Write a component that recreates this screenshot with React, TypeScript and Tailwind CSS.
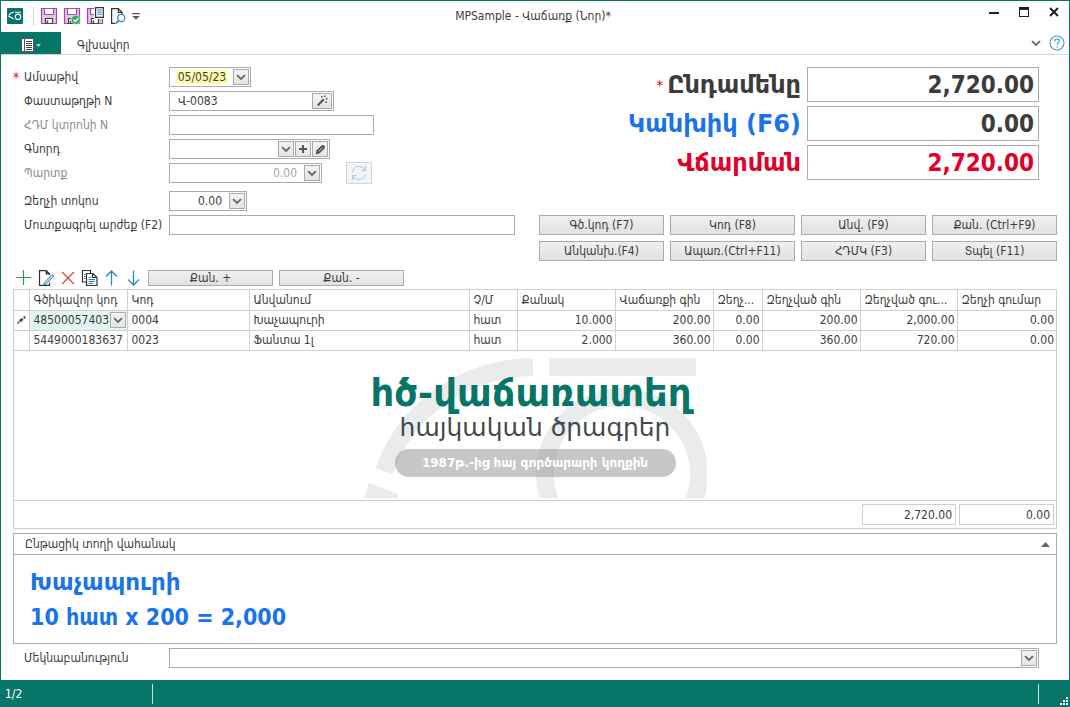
import React, { useState } from "react";
import clsx from "clsx";

const Chevron = () => (
  <svg width="10" height="7" viewBox="0 0 10 7" fill="none" className="shrink-0">
    <path d="M1 1.2l4 3.8 4-3.8" stroke="#666" strokeWidth="1.8" />
  </svg>
);

const smallBtn =
  "h-4 shrink-0 flex items-center justify-center border border-[#ababab] bg-linear-to-b from-[#f4f4f4] to-[#e4e4e4]";
const box = "h-5 flex items-center gap-px border border-[#ababab] bg-white p-px";
const field = "min-w-0 flex-1 bg-transparent outline-none";

const DropButton = ({ label }: { label: string }) => (
  <button aria-label={label} className={clsx(smallBtn, "w-4")}>
    <Chevron />
  </button>
);

interface DropSelectProps {
  id: string;
  options: string[];
}

const DropSelect = ({ id, options }: DropSelectProps) => (
  <div className="relative flex flex-1 items-center justify-end">
    <select id={id} className="absolute inset-0 w-full appearance-none px-2 outline-none">
      <option value=""></option>
      {options.map((o) => (
        <option key={o}>{o}</option>
      ))}
    </select>
    <span className={clsx(smallBtn, "pointer-events-none relative w-4")}>
      <Chevron />
    </span>
  </div>
);

interface RowProps {
  id: string;
  label: string;
  required?: boolean;
  muted?: boolean;
  children: React.ReactNode;
}

const FormRow = ({ id, label, required, muted, children }: RowProps) => (
  <div className="flex h-5 items-center">
    <label
      htmlFor={id}
      className={clsx("flex w-[156px] shrink-0 whitespace-nowrap", muted && "text-[#8c8c8c]")}
    >
      <span className="w-[11px] text-[14px] leading-4 text-red-600">{required && "*"}</span>
      {label}
    </label>
    {children}
  </div>
);

const totals = [
  { id: "total", label: "Ընդամենը", value: "2,720.00", required: true, labelColor: "text-[#3c3c3c]", color: "text-[#3c3c3c]" },
  { id: "cash", label: "Կանխիկ (F6)", value: "0.00", labelColor: "text-[#1a73e8]", color: "text-[#3c3c3c]" },
  { id: "due", label: "Վճարման", value: "2,720.00", labelColor: "text-[#e00029]", color: "text-[#e00029]" },
];

const actions = [
  "Գծ.կոդ (F7)",
  "Կոդ (F8)",
  "Անվ. (F9)",
  "Քան. (Ctrl+F9)",
  "Անկանխ.(F4)",
  "Ապառ.(Ctrl+F11)",
  "ՀԴՄԿ (F3)",
  "Տպել (F11)",
];

const columns = [
  "Գծիկավոր կոդ",
  "Կոդ",
  "Անվանում",
  "Չ/Մ",
  "Քանակ",
  "Վաճառքի գին",
  "Զեղչ...",
  "Զեղչված գին",
  "Զեղչված գու...",
  "Զեղչի գումար",
];

const rows = [
  ["48500057403", "0004", "Խաչապուրի", "հատ", "10.000", "200.00", "0.00", "200.00", "2,000.00", "0.00"],
  ["5449000183637", "0023", "Ֆանտա 1լ", "հատ", "2.000", "360.00", "0.00", "360.00", "720.00", "0.00"],
];

const Floppy = ({ children }: { children?: React.ReactNode }) => (
  <svg width="18" height="18" viewBox="0 0 18 18" fill="none">
    <path d="M1.500 1.500h15v15h-15z" fill="#e3c3e6" stroke="#9b4fa3" strokeWidth="1.2" />
    <path d="M4.500 1.500h9v6h-9z" fill="#fff" stroke="#9b4fa3" strokeWidth="1.2" />
    <path d="M5.500 11.500h7v5h-7z" fill="#fff" stroke="#444" strokeWidth="1.2" />
    <path d="M7.500 13.500v3" stroke="#444" strokeWidth="1.4" />
    {children}
  </svg>
);

const Logo = () => (
  <svg width="16" height="16" viewBox="0 0 16 16" fill="none">
    <rect width="16" height="16" rx="1" fill="#077568" />
    <path d="M7 4.2C4.500 4.300 2.800 5.600 1.800 7.400M1.400 8.400C3 8.600 5 9.600 6.600 11.200M8 4.200h6" stroke="#fff" strokeWidth="1.1" />
    <circle cx="11" cy="8.8" r="2.7" stroke="#fff" strokeWidth="1.1" />
  </svg>
);

const TitleBar = () => (
  <header className="flex h-[31px] items-center pl-1.5 pr-1.5 pb-px">
    <div className="flex flex-1 items-center">
      <Logo />
      <span className="ml-2.5 mr-1.5 h-[19px] w-px bg-[#d4d4d4]" />
      <div className="flex items-center gap-[5px]">
        <button aria-label="Save">
          <Floppy />
        </button>
        <button aria-label="Save and approve">
          <Floppy>
            <circle cx="12.8" cy="12.8" r="4.6" fill="#3fa66b" stroke="#fff" strokeWidth=".5" />
            <path d="M10.500 12.800l1.800 1.800 3-3.400" stroke="#fff" strokeWidth="1.3" />
          </Floppy>
        </button>
        <button aria-label="Save and print">
          <Floppy>
            <path d="M8 0h10v12H8z" fill="#fff" />
            <path d="M9.600.700h7.700v9.600H9.600z" fill="#fff" stroke="#333" strokeWidth="1.2" />
            <path d="M11.300 3h4.500M11.300 5.100h4.500M11.300 7.200h4.500" stroke="#1f7fc4" />
          </Floppy>
        </button>
        <button aria-label="Preview">
          <svg width="18" height="18" viewBox="0 0 18 18" fill="none">
            <path d="M6 16.400H2.600V1.600h6.800l3.800 3.800V7M9.400 1.600v3.800h3.800" stroke="#333" strokeWidth="1.2" />
            <circle cx="12.2" cy="11" r="3.6" stroke="#2f86c5" strokeWidth="1.2" />
            <path d="M9.600 13.600l-3 3" stroke="#2f86c5" strokeWidth="1.6" />
          </svg>
        </button>
        <button aria-label="Customize">
          <svg width="8" height="7" viewBox="0 0 8 7">
            <path d="M0 0h8v1.300H0zM.300 3h7.400L4 6.600z" fill="#555" />
          </svg>
        </button>
      </div>
    </div>
    <h1 className="text-[12px]">MPSample - Վաճառք (Նոր)*</h1>
    <div className="flex flex-1 items-center justify-end gap-5 pr-1 pb-2">
      <button aria-label="Minimize">
        <svg width="10" height="10">
          <path d="M0 5h10v2H0z" fill="#222" />
        </svg>
      </button>
      <button aria-label="Maximize">
        <svg width="10" height="10">
          <path d="M0 0h10v10H0zM1 3v6h8V3z" fill="#222" fillRule="evenodd" />
        </svg>
      </button>
      <button aria-label="Close">
        <svg width="10" height="10">
          <path d="M1 1l8 8M9 1L1 9" stroke="#222" strokeWidth="2" />
        </svg>
      </button>
    </div>
  </header>
);

const Ribbon = () => (
  <nav className="flex h-[23px] items-center border-b border-[#d4d4d4]">
    <button aria-label="Menu" className="flex h-[22px] w-[60px] items-center justify-center gap-0.5 bg-[#077568] pt-1">
      <svg width="13" height="14" viewBox="0 0 13 14" fill="none">
        <path d="M.500.500h12v13H.500z" fill="#fff" stroke="#555" />
        <path d="M3.500 1v12" stroke="#555" />
        <path d="M5 3.500h6M5 5.500h6M5 7.500h6M5 9.500h6M5 11.500h6" stroke="#444" />
      </svg>
      <svg width="5" height="3">
        <path d="M0 0h5L2.500 3z" fill="#b6cdc9" />
      </svg>
    </button>
    <button className="ml-4 pt-1">Գլխավոր</button>
    <div className="ml-auto flex items-center gap-2 pr-1">
      <button aria-label="Collapse">
        <Chevron />
      </button>
      <button aria-label="Help">
        <svg width="16" height="16" viewBox="0 0 16 16" fill="none" stroke="#3b97d0" strokeWidth="1.1">
          <circle cx="8" cy="8" r="7" />
          <path d="M5.800 6.300c0-3 4.600-3 4.600-.300 0 1.800-2.300 1.700-2.300 3.800M8.100 11v1.400" />
        </svg>
      </button>
    </div>
  </nav>
);

const GridTools = () => (
  <div className="flex h-4 items-center">
    <div className="flex w-[135px] items-center gap-1 pl-0.5">
      <button aria-label="Add">
        <svg width="18" height="18">
          <path d="M8.500 1v15M1 8.500h15" stroke="#28a05a" strokeWidth="1.2" />
        </svg>
      </button>
      <button aria-label="Edit">
        <svg width="18" height="18" viewBox="0 0 18 18" fill="none">
          <path d="M12.500 13.500v2.900h-10V1.600h6.800l3.200 3.200V6M9.300 1.600v3.200h3.200" stroke="#333" strokeWidth="1.2" />
          <path d="M15.300 5.500l1.500 1.300-7.500 8-2.500 1 .8-2.500z" fill="#b9dcf3" stroke="#2f86c5" />
        </svg>
      </button>
      <button aria-label="Delete">
        <svg width="18" height="18">
          <path d="M3 3l12 12M15 3L3 15" stroke="#e5403c" strokeWidth="1.3" />
        </svg>
      </button>
      <button aria-label="Copy">
        <svg width="18" height="18" viewBox="0 0 18 18" fill="none">
          <path d="M5 13H1.500V1.500h8V4" stroke="#333" strokeWidth="1.2" />
          <path d="M5.500 4.500h6.500l4 4v8H5.500zM11.500 4.500v4H16" fill="#fff" stroke="#333" strokeWidth="1.200" />
          <path d="M7.500 8.500H10M7.500 10.500h6.500M7.500 12.500h6.500M7.500 14.500h4.500M3 5.500h1.500M3 7.500h1.500M3 9.500h1.500" stroke="#2f86c5" />
        </svg>
      </button>
      <button aria-label="Move up">
        <svg width="18" height="18" fill="none">
          <path d="M8.500 16.500v-15M3 7.500L8.500 2 14 7.500" stroke="#2f86c5" strokeWidth="1.3" />
        </svg>
      </button>
      <button aria-label="Move down">
        <svg width="18" height="18" fill="none">
          <path d="M8.500 1.500v15M3 10.500L8.500 16l5.500-5.500" stroke="#2f86c5" strokeWidth="1.3" />
        </svg>
      </button>
    </div>
    <div className="flex gap-1.5">
      {["Քան. +", "Քան. -"].map((t) => (
        <button
          key={t}
          className="h-4 w-[125px] border border-[#ababab] bg-linear-to-b from-[#f0f0f0] to-[#e1e1e1] leading-[14px]"
        >
          {t}
        </button>
      ))}
    </div>
  </div>
);

const ItemsTable = () => (
  <table className="w-full table-fixed border-collapse text-left">
    <colgroup>
      <col className="w-[15px]" />
      <col className="w-[98px]" />
      <col className="w-[122px]" />
      <col />
      <col className="w-12" />
      <col className="w-[98px]" />
      <col className="w-[98px]" />
      <col className="w-[49px]" />
      <col className="w-[98px]" />
      <col className="w-[97px]" />
      <col className="w-[99px]" />
    </colgroup>
    <thead>
      <tr className="h-5 border-b border-[#d0d0d0]">
        <th className="border-r border-[#d0d0d0]" />
        {columns.map((c) => (
          <th key={c} className="truncate border-r border-[#d0d0d0] pl-1 font-normal last:border-r-0">
            {c}
          </th>
        ))}
      </tr>
    </thead>
    <tbody>
      {rows.map((row, r) => (
        <tr key={row[0]} className="h-5 border-b border-[#d0d0d0]">
          <td className="border-r border-[#d0d0d0]">
            {r === 0 && (
              <svg width="11" height="10" viewBox="0 0 11 10" className="mx-auto">
                <path d="M1 9l1-3 2 2zM2.800 5.300l3-2.500 1.800 2-3 2.600zM7 2l1.600-1.200L10 2.400 8.500 3.900z" fill="#555" />
              </svg>
            )}
          </td>
          {row.map((cell, i) => (
            <td
              key={i}
              className={clsx(
                "whitespace-nowrap border-r border-[#d0d0d0] last:border-r-0",
                i > 3 ? "pr-0.5 text-right" : "pl-1",
                r === 0 && i === 0 && "bg-[#e3f5f3]"
              )}
            >
              {r === 0 && i === 0 ? (
                <div className="flex items-center justify-between pr-px">
                  {cell}
                  <DropButton label="Choose item" />
                </div>
              ) : (
                cell
              )}
            </td>
          ))}
        </tr>
      ))}
    </tbody>
  </table>
);

const Brand = () => (
  <div className="relative flex h-[140px] w-[344px] flex-col items-center">
    <svg width="344" height="140" viewBox="0 0 344 140" fill="none" className="absolute inset-0">
      <g stroke="#eaecec" strokeWidth="18">
        <path d="M170 9C102 10 44 50 21 113" />
        <path d="M186 9h147" />
        <circle cx="259" cy="116" r="77" />
      </g>
      <path d="M6 125l29 11v4H1z" fill="#eaecec" />
    </svg>
    <div className="relative mt-3.5 whitespace-nowrap pr-2 font-['DejaVu_Sans'] text-[37px] font-bold leading-[44px] text-[#077568]">
      հծ-վաճառատեղ
    </div>
    <div className="relative whitespace-nowrap font-['DejaVu_Sans'] text-[25px] leading-6 text-[#414a50]">
      հայկական ծրագրեր
    </div>
    <div className="relative mt-[9px] h-7 w-[281px] whitespace-nowrap rounded-full bg-[#8f8f93]/50 text-center font-['DejaVu_Sans'] text-[12px] font-bold leading-7 text-white">
      1987թ.-ից հայ գործարարի կողքին
    </div>
  </div>
);

export default function App() {
  const [open, setOpen] = useState(true);

  return (
    <div className="flex min-h-screen flex-col border border-b-0 border-[#077568] bg-white font-['DejaVu_Sans_Condensed','DejaVu_Sans',sans-serif] text-[12px] leading-4 text-[#3c3c3c]">
      <TitleBar />
      <Ribbon />

      <main className="flex flex-1 flex-col px-3 pt-3 pb-3">
        {/* Document fields and totals */}
        <div className="flex gap-6">
          <div className="flex min-w-0 flex-1 flex-col gap-1">
            <FormRow id="date" label="Ամսաթիվ" required>
              <div className={clsx(box, "w-[82px]")}>
                <input id="date" defaultValue="05/05/23" className="ml-[5px] mr-1 h-[14px] min-w-0 flex-1 bg-[#fffcae] text-center outline-none" />
                <DropButton label="Open calendar" />
              </div>
            </FormRow>
            <FormRow id="doc" label="Փաստաթղթի N">
              <div className={clsx(box, "w-[165px]")}>
                <input id="doc" defaultValue="Վ-0083" className={clsx(field, "pl-[7px]")} />
                <button aria-label="Generate number" className={clsx(smallBtn, "w-5")}>
                  <svg width="12" height="12" viewBox="0 0 12 12" fill="#555">
                    <path d="M1 9.800L7 3.500l1.500 1.500-6 6.300zM5 1h1.500v1.500H5zM8 .500h1.500V2H8zM10 3h1.500v1.500H10zM9.500 6.500H11V8H9.500z" />
                  </svg>
                </button>
              </div>
            </FormRow>
            <FormRow id="receipt" label="ՀԴՄ կտրոնի N" muted>
              <div className={clsx(box, "w-[205px]")}>
                <input id="receipt" className={clsx(field, "px-1.5")} />
              </div>
            </FormRow>
            <FormRow id="customer" label="Գնորդ">
              <div className={clsx(box, "w-[161px]")}>
                <DropSelect id="customer" options={[]} />
                <button aria-label="Add customer" className={clsx(smallBtn, "w-4")}>
                  <svg width="8" height="8">
                    <path d="M4 0v8M0 4h8" stroke="#555" strokeWidth="2" />
                  </svg>
                </button>
                <button aria-label="Edit customer" className={clsx(smallBtn, "w-4")}>
                  <svg width="11" height="11" viewBox="0 0 11 11" fill="none">
                    <path d="M.800 10.200l.6-3.600L6.500 1.500c1.800-1.400 4.400 1 3 3L4.400 9.600z" fill="#555" />
                    <path d="M3.500 7.500l3.500-3.500" stroke="#ddd" strokeWidth=".8" />
                  </svg>
                </button>
              </div>
            </FormRow>
            <FormRow id="debt" label="Պարտք" muted>
              <div className={clsx(box, "w-[153px]")}>
                <input id="debt" defaultValue="0.00" className={clsx(field, "pr-1.5 text-right text-[#a8a8a8]")} />
                <DropButton label="Open calculator" />
              </div>
              <button
                aria-label="Refresh debt"
                disabled
                className="ml-6 flex h-[22px] w-[26px] shrink-0 items-center justify-center border border-[#d6d6d6] bg-[#f4f4f4]"
              >
                <svg width="16" height="16" viewBox="0 0 16 16" fill="none" stroke="#a5d0ee" strokeWidth="1.1">
                  <path d="M1.500 7C2 3.500 5 1.500 8 1.500c2.500 0 4.500 1.200 5.800 3.500M14.500 1v4.500H10M14.500 9c-.500 3.500-3.500 5.500-6.500 5.500-2.500 0-4.500-1.200-5.800-3.500M1.500 15v-4.500H6" />
                </svg>
              </button>
            </FormRow>
            <div className="mt-1 flex flex-col gap-1">
              <FormRow id="discount" label="Զեղչի տոկոս">
                <div className={clsx(box, "w-[78px]")}>
                  <input id="discount" defaultValue="0.00" className={clsx(field, "pr-1.5 text-right")} />
                  <DropButton label="Open calculator" />
                </div>
              </FormRow>
              <FormRow id="entry" label="Մուտքագրել արժեք (F2)">
                <div className={clsx(box, "min-w-0 flex-1")}>
                  <input id="entry" className={clsx(field, "px-1.5")} />
                </div>
              </FormRow>
            </div>
          </div>

          <div className="w-[518px] shrink-0">
            <div className="flex flex-col gap-1 pr-[18px]">
              {totals.map((t) => (
                <div key={t.id} className="flex items-center justify-end gap-1.5">
                  <label
                    htmlFor={t.id}
                    className={clsx("flex font-['DejaVu_Sans'] text-[24px] font-bold leading-8", t.labelColor)}
                  >
                    {t.required && <span className="mr-1 text-[14px] font-normal leading-8 text-red-600">*</span>}
                    {t.label}
                  </label>
                  <input
                    id={t.id}
                    defaultValue={t.value}
                    className={clsx(
                      "h-[35px] w-[232px] border border-[#ababab] px-1 text-right text-[24px] font-bold outline-none",
                      t.color
                    )}
                  />
                </div>
              ))}
            </div>
            <div className="mt-[35px] grid grid-cols-4 gap-1.5">
              {actions.map((a) => (
                <button
                  key={a}
                  className="h-5 whitespace-nowrap border border-[#ababab] bg-linear-to-b from-[#f0f0f0] to-[#e1e1e1]"
                >
                  {a}
                </button>
              ))}
            </div>
          </div>
        </div>

        <div className="mt-[9px] mb-[3px]">
          <GridTools />
        </div>

        {/* Items */}
        <section className="flex flex-1 flex-col border border-[#d0d0d0]">
          <ItemsTable />
          <div className="flex flex-1 items-end justify-center pb-0.5">
            <Brand />
          </div>
          <div className="flex h-7 items-center justify-end gap-[3px] border-t border-[#d0d0d0] pr-0.5">
            <output className="h-[21px] w-[94px] border border-[#d0d0d0] px-[3px] text-right leading-5">2,720.00</output>
            <output className="h-[21px] w-[95px] border border-[#d0d0d0] px-[3px] text-right leading-5">0.00</output>
          </div>
        </section>

        {/* Current row */}
        <section className="mt-1 border border-[#ababab]">
          <button
            onClick={() => setOpen(!open)}
            className="flex h-5 w-full items-center justify-between pl-[11px] pr-1.5"
          >
            Ընթացիկ տողի վահանակ
            <svg width="9" height="5">
              <path d="M0 5h9L4.500 0z" fill="#666" />
            </svg>
          </button>
          {open && (
            <div className="border-t border-[#ababab] px-4 pt-2.5 pb-2 text-[23px] font-bold leading-[35px] text-[#1a73e8]">
              <p className="font-['DejaVu_Sans']">Խաչապուրի</p>
              <p>10 հատ x 200 = 2,000</p>
            </div>
          )}
        </section>

        <div className="mt-1 pr-[18px]">
          <FormRow id="comment" label="Մեկնաբանություն">
            <div className={clsx(box, "min-w-0 flex-1")}>
              <DropSelect id="comment" options={[]} />
            </div>
          </FormRow>
        </div>
      </main>

      <footer className="flex h-[27px] items-center bg-[#077568] text-white">
        <span className="w-[151px] pl-1">1/2</span>
        <span className="h-5 w-px bg-[#c9dedb]" />
        <span className="ml-auto h-5 w-px bg-[#c9dedb]" />
        <svg width="30" height="27" fill="#fff">
          <path d="M27 17h2v2h-2zM24 20h2v2h-2zM27 20h2v2h-2zM21 23h2v2h-2zM24 23h2v2h-2zM27 23h2v2h-2z" />
        </svg>
      </footer>
    </div>
  );
}
